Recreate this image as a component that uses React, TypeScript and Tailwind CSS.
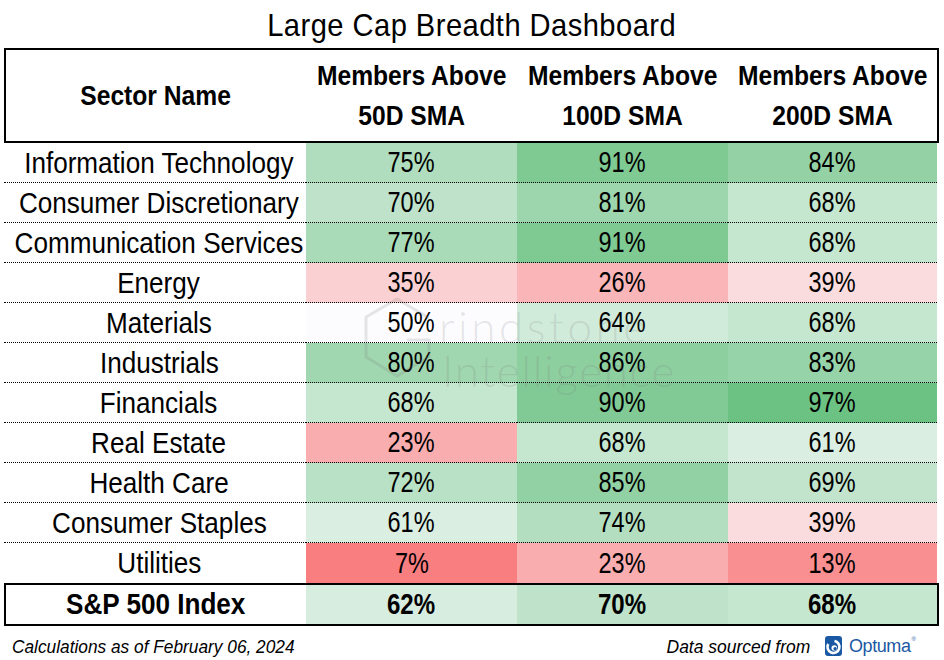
import React from 'react';

type Row = [string, number, number, number];

const rows: Row[] = [
  ['Information Technology', 75, 91, 84],
  ['Consumer Discretionary', 70, 81, 68],
  ['Communication Services', 77, 91, 68],
  ['Energy', 35, 26, 39],
  ['Materials', 50, 64, 68],
  ['Industrials', 80, 86, 83],
  ['Financials', 68, 90, 97],
  ['Real Estate', 23, 68, 61],
  ['Health Care', 72, 85, 69],
  ['Consumer Staples', 61, 74, 39],
  ['Utilities', 7, 23, 13],
];

const index: Row = ['S&P 500 Index', 62, 70, 68];

// 3-colour scale: red at 0, white at 50, green at 100
function heat(v: number) {
  const red = [248, 105, 107];
  const white = [252, 252, 255];
  const green = [99, 190, 123];
  const [a, b, t] = v <= 50 ? [red, white, v / 50] : [white, green, (v - 50) / 50];
  const c = a.map((x, i) => Math.round(x + (b[i] - x) * t));
  return `rgb(${c[0]}, ${c[1]}, ${c[2]})`;
}

// no narrow face installed, so squeeze Liberation Sans horizontally
function N({ cls, children }: { cls: string; children: React.ReactNode }) {
  return <span className={`inline-block whitespace-nowrap ${cls}`}>{children}</span>;
}

function OptumaLogo() {
  return (
    <div className="flex items-center gap-[7px] not-italic">
      <svg width="17" height="20" viewBox="0 0 17 20">
        <rect x="0" y="0" width="17" height="20" rx="3" fill="#1b58a3" />
        <path d="M3.2 8 A6 6 0 1 0 9.5 5" fill="none" stroke="#fff" strokeWidth="2.6" />
        <circle cx="9.3" cy="12" r="2.8" fill="#fff" />
        <circle cx="10.1" cy="12.7" r="1.7" fill="#1b58a3" />
      </svg>
      <span className="font-['Liberation_Sans',sans-serif] text-[18px] leading-[18px] tracking-[-0.4px] text-[#1b58a3] not-italic">
        Optuma
      </span>
      <span className="font-['Liberation_Sans',sans-serif] text-[6px] leading-[6px] text-[#1b58a3] self-start ml-[-6px] not-italic">
        ®
      </span>
    </div>
  );
}

function Watermark() {
  return (
    <div className="pointer-events-none absolute left-[363px] top-[296px] flex items-start">
      <svg width="70" height="84" viewBox="0 0 70 84">
        <path
          d="M66 22 L34 3 L3 21 L3 61 L34 80 L66 61 L66 44 L44 44"
          fill="none"
          stroke="rgba(110,110,110,0.17)"
          strokeWidth="3"
        />
      </svg>
      <div className="ml-[6px] font-['Lato',sans-serif] font-light text-[44px] leading-[44px] text-[rgba(110,110,110,0.17)]">
        <div className="mt-[8px] tracking-[3.5px]">rindstone</div>
        <div className="ml-[3px] tracking-[1.6px]">Intelligence</div>
      </div>
    </div>
  );
}

export default function App() {
  return (
    <div className="relative w-[944px] h-[660px] overflow-hidden bg-white text-black font-['Liberation_Sans',Arial,sans-serif]">
      {/* Title */}
      <div className="h-[48px] pt-[9px] text-center text-[32px] leading-[32px] tracking-[0.5px]">
        <N cls="scale-x-[0.91]">Large Cap Breadth Dashboard</N>
      </div>

      {/* Header box */}
      <div className="mx-[4px] w-[935px] h-[95px] border-2 border-black grid grid-cols-[300px_211px_211px_209px] font-bold text-[28px] leading-[40px]">
        <div className="flex items-center justify-center">
          <N cls="scale-x-[0.88]">Sector Name</N>
        </div>
        {['50D SMA', '100D SMA', '200D SMA'].map((s) => (
          <div key={s} className="flex flex-col items-center justify-center">
            <N cls="scale-x-[0.88]">Members Above</N>
            <N cls="scale-x-[0.88]">{s}</N>
          </div>
        ))}
      </div>

      {/* Sector rows */}
      <div className="ml-[4px] w-[933px]">
        {rows.map((r, i) => {
          const last = i === rows.length - 1;
          const cell = last ? 'h-[40px]' : 'h-[40px] border-b border-dotted border-black';
          return (
            <div key={r[0]} className="grid grid-cols-[302px_211px_211px_209px]">
              <div className={`${cell} flex items-center justify-center pl-[8px] text-[30px] leading-[30px]`}>
                <N cls="scale-x-[0.87]">{r[0]}</N>
              </div>
              {[r[1], r[2], r[3]].map((v, j) => (
                <div
                  key={j}
                  className={`${cell} flex items-center justify-center text-[29px] leading-[29px]`}
                  style={{ backgroundColor: heat(v) }}
                >
                  <N cls="scale-x-[0.81]">{v}%</N>
                </div>
              ))}
            </div>
          );
        })}
      </div>

      {/* Index row */}
      <div className="mx-[4px] w-[935px] h-[43px] border-2 border-black grid grid-cols-[300px_211px_211px_209px] font-bold text-[29px] leading-[29px]">
        <div className="flex items-center justify-center">
          <N cls="scale-x-[0.9]">{index[0]}</N>
        </div>
        {[index[1], index[2], index[3]].map((v, j) => (
          <div key={j} className="flex items-center justify-center" style={{ backgroundColor: heat(v) }}>
            <N cls="scale-x-[0.83]">{v}%</N>
          </div>
        ))}
      </div>

      {/* Footer */}
      <div className="flex items-start justify-between pl-[12px] pr-[28px] pt-[11px] text-[19px] leading-[19px]">
        <N cls="italic origin-left scale-x-[0.91]">Calculations as of February 06, 2024</N>
        <div className="flex items-center gap-[15px] mt-[-1px]">
          <N cls="italic origin-right scale-x-[0.92]">Data sourced from</N>
          <OptumaLogo />
        </div>
      </div>

      <Watermark />
    </div>
  );
}
